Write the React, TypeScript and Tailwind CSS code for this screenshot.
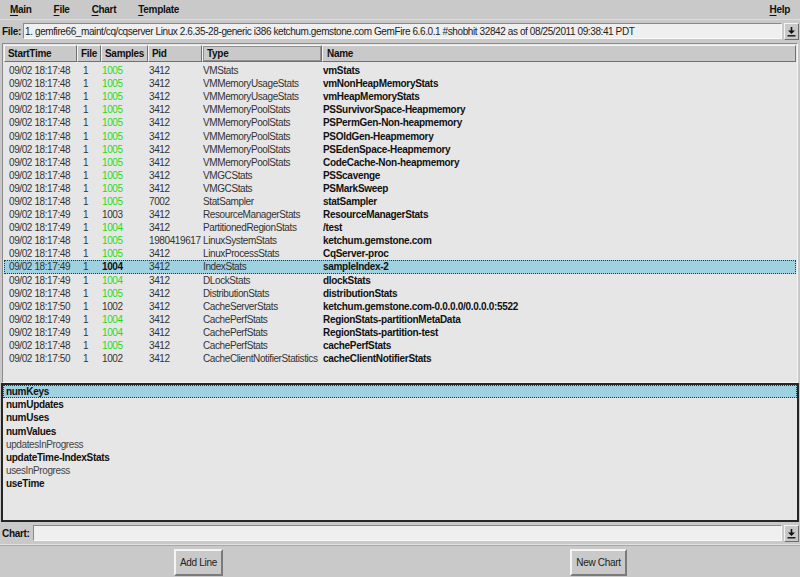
const rows: [string, string, string, string, string, string][] = [
  ["09/02 18:17:48", "1005", "g", "3412", "VMStats", "vmStats"],
  ["09/02 18:17:48", "1005", "g", "3412", "VMMemoryUsageStats", "vmNonHeapMemoryStats"],
  ["09/02 18:17:48", "1005", "g", "3412", "VMMemoryUsageStats", "vmHeapMemoryStats"],
  ["09/02 18:17:48", "1005", "g", "3412", "VMMemoryPoolStats", "PSSurvivorSpace-Heapmemory"],
  ["09/02 18:17:48", "1005", "g", "3412", "VMMemoryPoolStats", "PSPermGen-Non-heapmemory"],
  ["09/02 18:17:48", "1005", "g", "3412", "VMMemoryPoolStats", "PSOldGen-Heapmemory"],
  ["09/02 18:17:48", "1005", "g", "3412", "VMMemoryPoolStats", "PSEdenSpace-Heapmemory"],
  ["09/02 18:17:48", "1005", "g", "3412", "VMMemoryPoolStats", "CodeCache-Non-heapmemory"],
  ["09/02 18:17:48", "1005", "g", "3412", "VMGCStats", "PSScavenge"],
  ["09/02 18:17:48", "1005", "g", "3412", "VMGCStats", "PSMarkSweep"],
  ["09/02 18:17:48", "1005", "g", "7002", "StatSampler", "statSampler"],
  ["09/02 18:17:49", "1003", "n", "3412", "ResourceManagerStats", "ResourceManagerStats"],
  ["09/02 18:17:49", "1004", "g", "3412", "PartitionedRegionStats", "/test"],
  ["09/02 18:17:48", "1005", "g", "1980419617", "LinuxSystemStats", "ketchum.gemstone.com"],
  ["09/02 18:17:48", "1005", "g", "3412", "LinuxProcessStats", "CqServer-proc"],
  ["09/02 18:17:49", "1004", "s", "3412", "IndexStats", "sampleIndex-2"],
  ["09/02 18:17:49", "1004", "g", "3412", "DLockStats", "dlockStats"],
  ["09/02 18:17:48", "1005", "g", "3412", "DistributionStats", "distributionStats"],
  ["09/02 18:17:50", "1002", "n", "3412", "CacheServerStats", "ketchum.gemstone.com-0.0.0.0/0.0.0.0:5522"],
  ["09/02 18:17:49", "1004", "g", "3412", "CachePerfStats", "RegionStats-partitionMetaData"],
  ["09/02 18:17:49", "1004", "g", "3412", "CachePerfStats", "RegionStats-partition-test"],
  ["09/02 18:17:48", "1005", "g", "3412", "CachePerfStats", "cachePerfStats"],
  ["09/02 18:17:50", "1002", "n", "3412", "CacheClientNotifierStatistics", "cacheClientNotifierStats"],
];

const stats: [string, boolean][] = [
  ["numKeys", true],
  ["numUpdates", true],
  ["numUses", true],
  ["numValues", true],
  ["updatesInProgress", false],
  ["updateTime-IndexStats", true],
  ["usesInProgress", false],
  ["useTime", true],
];

function DropButton() {
  return (
    <div className="w-[15px] h-[17px] shrink-0 flex items-center justify-center bg-[#c9c9c9] border border-t-[#f4f4f4] border-l-[#f4f4f4] border-b-[#6e6e6e] border-r-[#6e6e6e]">
      <svg width="9" height="11" viewBox="0 0 9 11">
        <path d="M4.5 1v4.5" stroke="#111" strokeWidth="1.6" />
        <path d="M1 4.5h7L4.5 8z" fill="#111" />
        <path d="M0.5 9.8h8" stroke="#111" strokeWidth="1.4" />
      </svg>
    </div>
  );
}

function MenuItem({ label }: { label: string }) {
  return (
    <span className="px-[10px]">
      <span className="underline underline-offset-2">{label[0]}</span>
      {label.slice(1)}
    </span>
  );
}

const heads = [
  { t: "StartTime", w: "w-[73px]" },
  { t: "File", w: "w-[24px]" },
  { t: "Samples", w: "w-[47px]" },
  { t: "Pid", w: "w-[54px]" },
  { t: "Type", w: "w-[120px]" },
];

export default function App() {
  return (
    <div className="w-[800px] h-[577px] overflow-hidden bg-[#c9c9c9] flex flex-col font-['Liberation_Sans',Arial,sans-serif] text-[10px] text-[#111]">
      {/* Menu bar */}
      <div className="h-[20px] flex items-center font-bold tracking-[-0.3px] border-b border-[#dedede]">
        <MenuItem label="Main" />
        <span className="w-[2px]" />
        <MenuItem label="File" />
        <span className="w-[2px]" />
        <MenuItem label="Chart" />
        <span className="w-[2px]" />
        <MenuItem label="Template" />
        <span className="flex-1" />
        <MenuItem label="Help" />
      </div>

      {/* File row */}
      <div className="h-[22px] flex items-center pl-[2px] pr-[1px]">
        <span className="font-bold tracking-[-0.3px] pr-[2px]">File:</span>
        <div className="flex-1 h-[16px] flex items-center bg-[#efefef] border border-t-[#8a8a8a] border-l-[#8a8a8a] border-b-[#fafafa] border-r-[#fafafa] pl-[1px] mr-[2px] tracking-[-0.4px] text-[#222] whitespace-nowrap overflow-hidden">
          1. gemfire66_maint/cq/cqserver Linux 2.6.35-28-generic i386 ketchum.gemstone.com GemFire 6.6.0.1 #shobhit 32842 as of 08/25/2011 09:38:41 PDT
        </div>
        <DropButton />
      </div>

      {/* Table */}
      <div className="h-[340px] mx-[2px] mt-[1px] border border-t-[#8a8a8a] border-l-[#8a8a8a] border-b-[#f4f4f4] border-r-[#f4f4f4] bg-[#e6e6e6] flex flex-col p-[1px]">
        <div className="h-[17px] flex font-bold tracking-[-0.3px] shrink-0">
          {heads.map((h) => (
            <div
              key={h.t}
              className={`${h.w} shrink-0 bg-[#c9c9c9] border border-t-[#f4f4f4] border-l-[#f4f4f4] border-b-[#707070] border-r-[#707070] flex`}
            >
              {h.t === "Type" ? (
                <div className="flex-1 border border-[#909090] flex items-center pl-[3px]">{h.t}</div>
              ) : (
                <div className="flex-1 flex items-center pl-[3px]">{h.t}</div>
              )}
            </div>
          ))}
          <div className="flex-1 bg-[#c9c9c9] border border-t-[#f4f4f4] border-l-[#f4f4f4] border-b-[#707070] border-r-[#707070] flex items-center pl-[4px]">
            Name
          </div>
        </div>
        <div className="pt-[2px] flex flex-col">
          {rows.map((r, i) => {
            const sel = r[2] === "s";
            return (
              <div
                key={i}
                className={`h-[13.1px] flex items-center whitespace-nowrap ${
                  sel ? "bg-[#9fd1e1] border border-dotted border-[#333]" : "border border-transparent"
                }`}
              >
                <span className="w-[73px] shrink-0 pl-[4px] tracking-[-0.4px] text-[#333]">{r[0]}</span>
                <span className="w-[24px] shrink-0 pl-[5px] text-[#333]">1</span>
                <span
                  className={`w-[47px] shrink-0 tracking-[-0.4px] ${
                    r[2] === "g" ? "text-[#1fdc1f]" : sel ? "font-bold text-[#111]" : "text-[#333]"
                  }`}
                >
                  {r[1]}
                </span>
                <span className="w-[54px] shrink-0 tracking-[-0.4px] text-[#333]">{r[3]}</span>
                <span className="w-[120px] shrink-0 tracking-[-0.4px] text-[#333] overflow-hidden">{r[4]}</span>
                <span className="flex-1 font-bold tracking-[-0.3px] text-[#111]">{r[5]}</span>
              </div>
            );
          })}
        </div>
      </div>

      {/* Stat list */}
      <div className="h-[139px] mx-[1px] border-2 border-[#262626] bg-[#e6e6e6] flex flex-col">
        {stats.map(([s, b], i) => (
          <div
            key={s}
            className={`h-[13.2px] flex items-center pl-[2px] whitespace-nowrap ${
              i === 0 ? "bg-[#9fd1e1] border border-dotted border-[#333]" : "border border-transparent"
            } ${b ? "font-bold tracking-[-0.3px] text-[#111]" : "tracking-[-0.4px] text-[#444]"}`}
          >
            {s}
          </div>
        ))}
      </div>

      {/* Chart row */}
      <div className="h-[23px] flex items-center pl-[2px] pr-[1px] border-b border-[#e2e2e2]">
        <span className="font-bold tracking-[-0.3px] pr-[3px]">Chart:</span>
        <div className="flex-1 h-[16px] bg-[#efefef] border border-t-[#8a8a8a] border-l-[#8a8a8a] border-b-[#fafafa] border-r-[#fafafa] mr-[2px]" />
        <DropButton />
      </div>

      {/* Buttons */}
      <div className="flex-1 grid grid-cols-2 items-center border-t border-[#a8a8a8]">
        <div className="flex justify-center pr-[3px] pt-[2px]">
          <button className="h-[27px] px-[4px] bg-[#c9c9c9] border-2 border-t-[#f4f4f4] border-l-[#f4f4f4] border-b-[#7a7a7a] border-r-[#7a7a7a] tracking-[-0.3px] text-[#222]">
            Add Line
          </button>
        </div>
        <div className="flex justify-center pr-[3px] pt-[2px]">
          <button className="h-[27px] px-[4px] bg-[#c9c9c9] border-2 border-t-[#f4f4f4] border-l-[#f4f4f4] border-b-[#7a7a7a] border-r-[#7a7a7a] tracking-[-0.3px] text-[#222]">
            New Chart
          </button>
        </div>
      </div>
    </div>
  );
}
